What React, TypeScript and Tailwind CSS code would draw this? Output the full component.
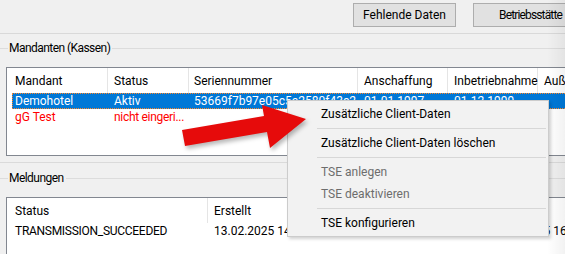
import React from "react";

const F = { fontFamily: "Roboto, 'Noto Sans', sans-serif" };

function GroupLabel({ text }: { text: string }) {
  return (
    <div className="flex h-[15px] items-center">
      <div className="h-px w-[8px] bg-[#dcdcdc]" />
      <span className="pl-[1px] pr-[2px] leading-[15px] tracking-[-0.55px] text-black">{text}</span>
      <div className="h-px flex-1 bg-[#dcdcdc]" />
    </div>
  );
}

export default function App() {
  return (
    <div
      className="relative h-[254px] w-[565px] overflow-hidden bg-[#f0f0f0] text-[12px] text-black"
      style={F}
    >
      {/* top toolbar */}
      <div className="flex h-[33px] items-start gap-[17px] pl-[353px] pt-[3px]">
        <div className="flex h-[24px] w-[103px] shrink-0 items-center justify-center border border-[#adadad] bg-[#e1e1e1]">
          Fehlende Daten
        </div>
        <div className="flex h-[24px] w-[130px] shrink-0 items-center border border-[#adadad] bg-[#e1e1e1] pl-[25px] tracking-[-0.85px]">
          Betriebsstätte
        </div>
      </div>
      <div className="h-px bg-[#d9d9d9]" />

      {/* Mandanten group */}
      <div className="mt-[7px]">
        <GroupLabel text="Mandanten (Kassen)" />
      </div>
      <div className="ml-[6px] mt-[11px] h-[89px] w-[640px] overflow-hidden border border-[#828790] bg-white">
        <div className="flex h-[25px] items-stretch">
          <div className="flex w-[101px] items-center border-r border-[#e5e5e5] pl-[8px]">Mandant</div>
          <div className="flex w-[81px] items-center border-r border-[#e5e5e5] pl-[6px]">Status</div>
          <div className="flex w-[169px] items-center border-r border-[#e5e5e5] pl-[5px]">Seriennummer</div>
          <div className="flex w-[90px] items-center border-r border-[#e5e5e5] pl-[6px]">Anschaffung</div>
          <div className="flex w-[90px] items-center border-r border-[#e5e5e5] pl-[6px]">Inbetriebnahme</div>
          <div className="flex w-[100px] items-center border-r border-[#e5e5e5] pl-[6px]">Außerbetriebnahme</div>
        </div>
        <div className="ml-[5px] flex h-[16px] items-center border border-dotted border-[#ff8728] bg-[#0078d7] text-white">
          <div className="w-[95px] whitespace-nowrap pl-[2px]">Demohotel</div>
          <div className="w-[81px] whitespace-nowrap pl-[6px]">Aktiv</div>
          <div className="w-[169px] whitespace-nowrap pl-[5px]">53669f7b97e05c5a2580f43c2</div>
          <div className="w-[90px] whitespace-nowrap pl-[6px]">01.01.1997</div>
          <div className="w-[90px] whitespace-nowrap pl-[6px]">01.12.1999</div>
        </div>
        <div className="ml-[5px] flex h-[16px] items-center text-[#ff0000]">
          <div className="w-[96px] whitespace-nowrap pl-[3px]">gG Test</div>
          <div className="w-[81px] whitespace-nowrap pl-[6px] tracking-[-0.3px]">nicht eingeri...</div>
        </div>
      </div>
      <div className="mt-[6px] h-px bg-[#dadada]" />

      {/* Meldungen group */}
      <div className="mt-[8px]">
        <GroupLabel text="Meldungen" />
      </div>
      <div className="ml-[6px] mt-[11px] h-[80px] w-[640px] overflow-hidden border border-[#828790] bg-white">
        <div className="flex h-[25px] items-stretch">
          <div className="flex w-[201px] items-center border-r border-[#e5e5e5] pl-[8px]">Status</div>
          <div className="flex w-[273px] items-center border-r border-[#e5e5e5] pl-[6px]">Erstellt</div>
          <div className="flex w-[120px] items-center border-r border-[#e5e5e5] pl-[6px]">Geändert</div>
        </div>
        <div className="ml-[5px] flex h-[16px] items-center">
          <div className="w-[196px] whitespace-nowrap pl-[3px] tracking-[-0.28px]">TRANSMISSION_SUCCEEDED</div>
          <div className="w-[273px] whitespace-nowrap pl-[6px]">13.02.2025 14:32:11</div>
          <div className="w-[120px] whitespace-nowrap pl-[9px]">13.02.2025 16:05:43</div>
        </div>
      </div>

      {/* right edge shading */}
      <div className="pointer-events-none absolute right-0 top-0 h-full w-[18px] bg-gradient-to-r from-transparent to-[rgba(0,0,0,0.05)]" />

      {/* context menu */}
      <div className="absolute left-[287px] top-[100px] flex h-[137px] w-[262px] flex-col border border-[#cccccc] bg-[#f2f2f2] pt-[2px] shadow-[2px_2px_3px_rgba(0,0,0,0.18)]">
        <div className="flex h-[22px] items-center pl-[33px] text-black">Zusätzliche Client-Daten</div>
        <div className="flex h-[7px] items-center pl-[29px] pr-[2px]">
          <div className="h-px flex-1 bg-[#d7d7d7]" />
        </div>
        <div className="flex h-[22px] items-center pl-[33px] text-black">Zusätzliche Client-Daten löschen</div>
        <div className="flex h-[7px] items-center pl-[29px] pr-[2px]">
          <div className="h-px flex-1 bg-[#d7d7d7]" />
        </div>
        <div className="flex h-[22px] items-center pl-[33px] text-[#6d6d6d]">TSE anlegen</div>
        <div className="flex h-[22px] items-center pl-[33px] text-[#6d6d6d]">TSE deaktivieren</div>
        <div className="flex h-[7px] items-center pl-[29px] pr-[2px]">
          <div className="h-px flex-1 bg-[#d7d7d7]" />
        </div>
        <div className="flex h-[22px] items-center pl-[33px] text-black">TSE konfigurieren</div>
      </div>

      {/* red arrow */}
      <svg
        className="pointer-events-none absolute left-0 top-0"
        width="565"
        height="254"
        viewBox="0 0 565 254"
        style={{ filter: "drop-shadow(2px 3px 2px rgba(0,0,0,0.28))" }}
      >
        <polygon
          points="182,130 264,116 262,105 306,119 270,148 267,132 185,146"
          fill="#e60b0b"
        />
      </svg>
    </div>
  );
}
